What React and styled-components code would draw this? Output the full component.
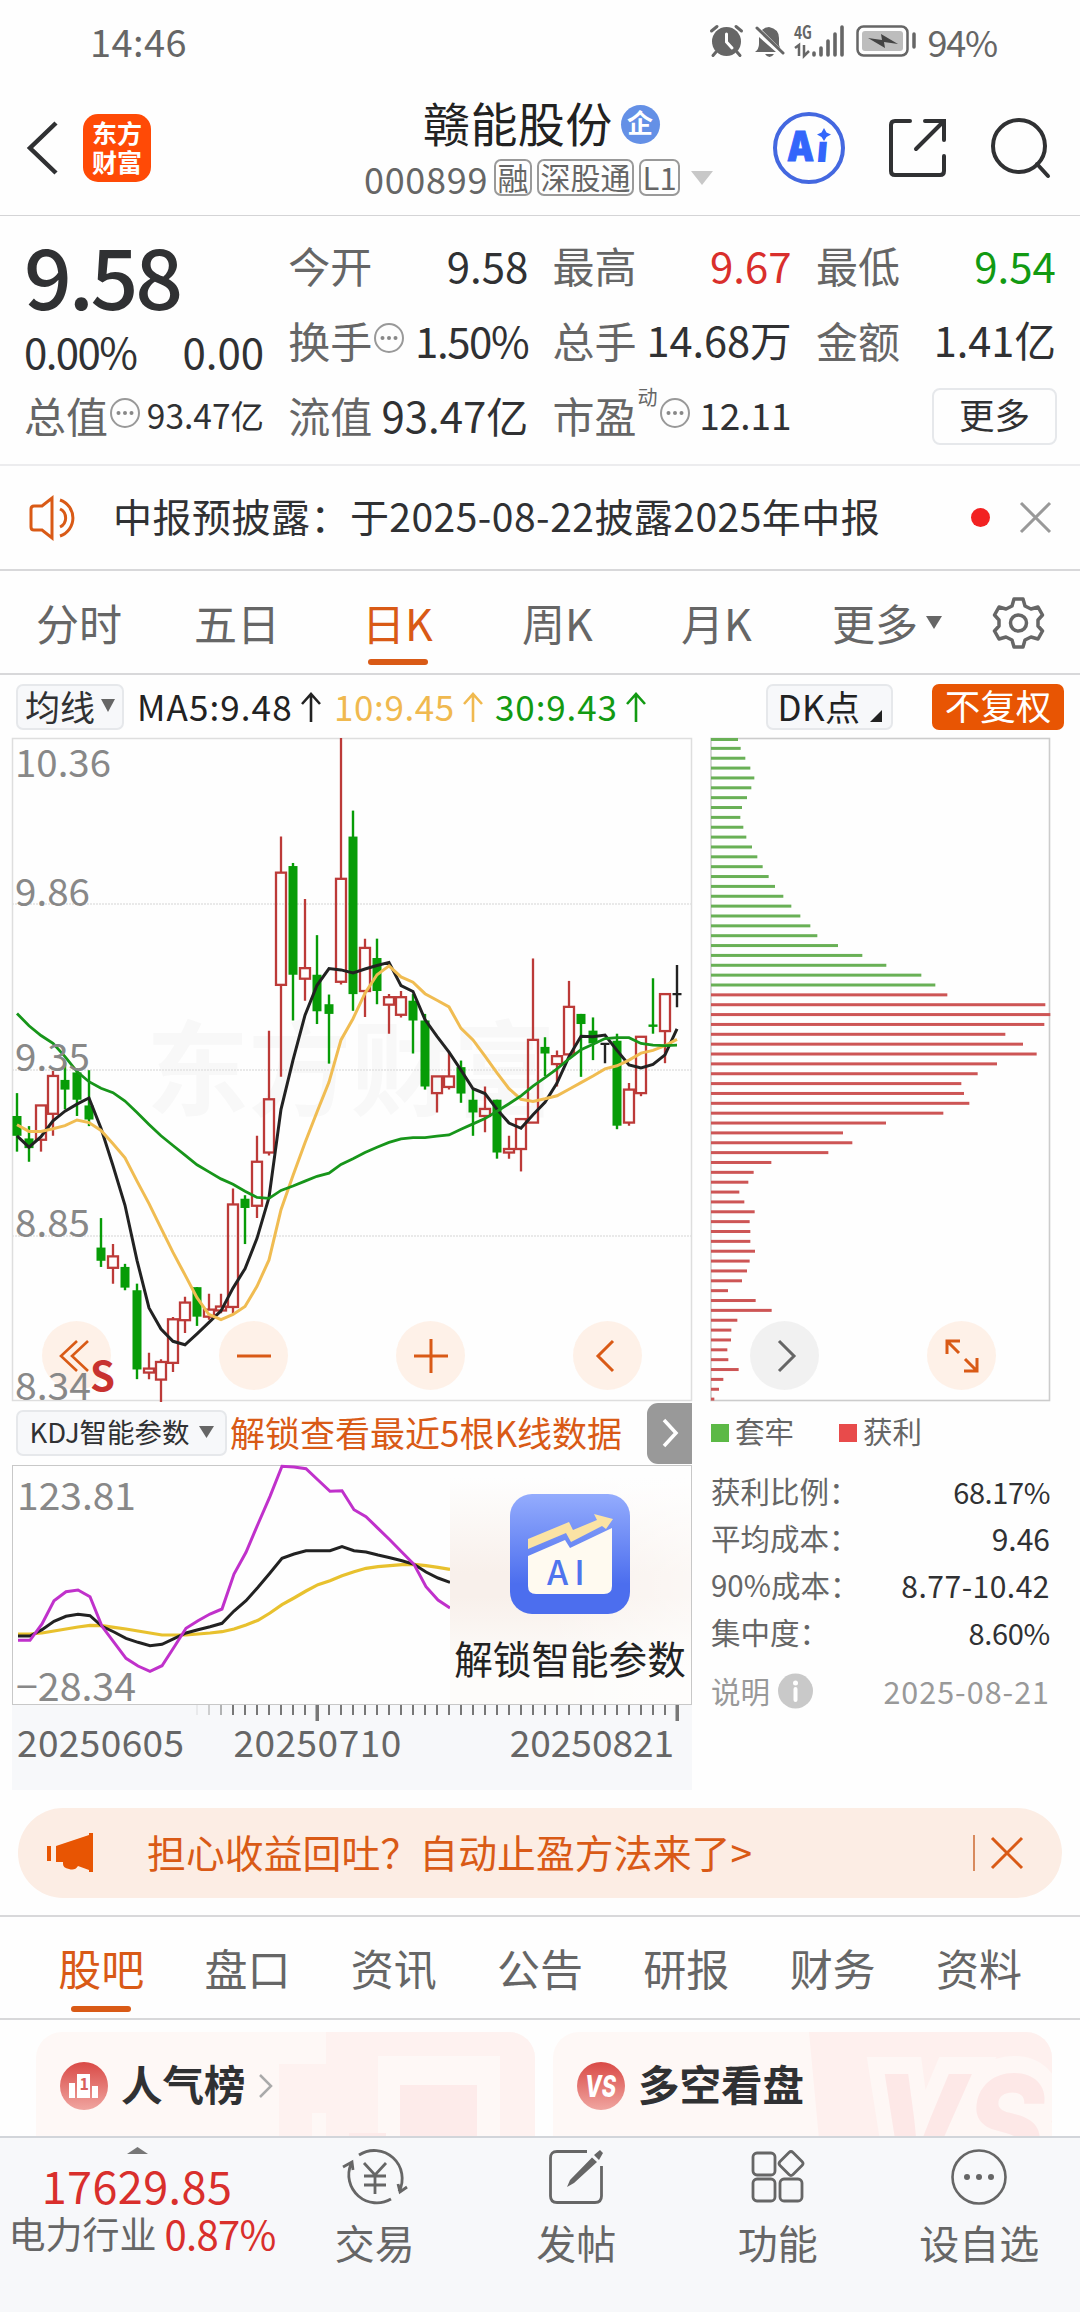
import React from "react";
import styled, { createGlobalStyle } from "styled-components";

const ORANGE = "#e85503";
const ORANGE_TEXT = "#d95a16";
const RED = "#d92f2c";
const GREEN = "#129a12";
const GREY = "#666";
const INK = "#303133";

const Global = createGlobalStyle`
  * { box-sizing: border-box; }
  body {
    margin: 0;
    background: #fff;
    font-family: "Noto Sans CJK SC", "Noto Sans", sans-serif;
    color: ${INK};
    -webkit-font-smoothing: antialiased;
  }
`;

const Page = styled.div`
  width: 1080px;
  height: 2312px;
  display: flex;
  flex-direction: column;
  overflow: hidden;
  background: #fefefe;
`;

const Text = styled.span`
  display: block;
  white-space: nowrap;
  line-height: 1;
  font-size: ${(p) => p.$size || 42}px;
  color: ${(p) => p.$color || INK};
  font-weight: ${(p) => p.$weight || 400};
  letter-spacing: ${(p) => p.$track || 0}px;
`;

const Icon = styled.svg`
  display: block;
  flex: none;
  overflow: visible;
`;

/* ---------- status bar ---------- */
const StatusBar = styled.div`
  height: 81px;
  flex: none;
  display: flex;
  align-items: center;
  justify-content: space-between;
  padding: 0 83px 0 90px;
`;
const StatusIcons = styled.div`
  display: flex;
  align-items: center;
  gap: 9px;
`;

/* ---------- header ---------- */
const Header = styled.header`
  height: 135px;
  flex: none;
  display: flex;
  align-items: center;
  border-bottom: 1px solid #d4d4d6;
`;
const HeaderLeft = styled.div`
  width: 364px;
  display: flex;
  align-items: center;
  gap: 24px;
  padding-left: 27px;
`;
const Logo = styled.div`
  width: 68px;
  height: 68px;
  border-radius: 15px;
  background: #ff4a06;
  display: flex;
  flex-direction: column;
  align-items: center;
  justify-content: center;
  gap: 4px;
  padding-bottom: 3px;
`;
const HeaderMid = styled.div`
  width: 409px;
  padding-top: 1px;
`;
const TitleRow = styled.div`
  height: 58px;
  display: flex;
  align-items: center;
  gap: 8px;
  padding-left: 59px;
`;
const Badge = styled.div`
  width: 39px;
  height: 39px;
  border-radius: 50%;
  margin-top: 5px;
  background: #6490e6;
  display: flex;
  justify-content: center;
  padding-top: 4px;
`;
const CodeRow = styled.div`
  height: 54px;
  display: flex;
  align-items: center;
`;
const Tag = styled.div`
  height: 37px;
  width: ${(p) => p.$w}px;
  margin-left: ${(p) => p.$ml || 5}px;
  border: 2px solid #999;
  border-radius: 7px;
  display: flex;
  align-items: center;
  justify-content: center;
  padding-bottom: 3px;
`;
const HeaderRight = styled.div`
  flex: 1;
  display: flex;
  align-items: center;
  justify-content: space-between;
  padding-right: 29px;
`;

/* ---------- quote ---------- */
const Quote = styled.section`
  height: 250px;
  flex: none;
  padding: 11px 24px 0 24px;
  display: grid;
  grid-template-columns: 240px 240px 239px 240px;
  column-gap: 24.3px;
  border-bottom: 2px solid #ececee;
`;
const Col = styled.div`
  display: flex;
  flex-direction: column;
`;
const Cell = styled.div`
  height: ${(p) => p.$h || 75}px;
  display: flex;
  align-items: center;
  justify-content: ${(p) => (p.$end ? "flex-end" : "space-between")};
`;
const Label = styled.div`
  display: flex;
  align-items: center;
  gap: ${(p) => p.$gap || 1}px;
`;
const Sup = styled(Text)`
  align-self: flex-start;
  margin-top: -7px;
`;
const MoreButton = styled.button`
  width: 125px;
  height: 57px;
  margin: 3px -1px 0 0;
  border: 2px solid #e6e8eb;
  border-radius: 8px;
  background: #fefefe;
  padding: 0 0 5px;
  font-family: inherit;
  display: flex;
  align-items: center;
  justify-content: center;
`;

/* ---------- news ---------- */
const News = styled.section`
  height: 105px;
  flex: none;
  display: flex;
  align-items: center;
  padding: 0 29px;
  border-bottom: 2px solid #d8d8da;
`;
const NewsText = styled.div`
  margin-left: 33px;
  padding-bottom: 4px;
  flex: 1;
`;
const Dot = styled.div`
  width: 19px;
  height: 19px;
  border-radius: 50%;
  background: #f22222;
  margin-right: 30px;
`;

/* ---------- tabs ---------- */
const PeriodTabs = styled.nav`
  height: 104px;
  flex: none;
  display: grid;
  grid-template-columns: 158px 158px 163px 157px 161px 176px 107px;
  border-bottom: 2px solid #d8d8da;
`;
const Tab = styled.div`
  display: flex;
  flex-direction: column;
  align-items: center;
  padding-top: ${(p) => p.$pt || 30}px;
  color: ${(p) => (p.$on ? ORANGE_TEXT : GREY)};
  font-size: ${(p) => p.$size || 43}px;
  line-height: 1;
  white-space: nowrap;
`;
const TabLine = styled.i`
  width: 60px;
  height: 6px;
  border-radius: 3px;
  background: ${ORANGE_TEXT};
  margin-top: ${(p) => p.$mt || 17}px;
`;
const MoreTab = styled.div`
  display: flex;
  padding: 30px 0 0 35px;
  gap: 8px;
`;
const GearCell = styled.div`
  padding: 26px 0 0 20px;
`;

/* ---------- MA toolbar ---------- */
const MaBar = styled.div`
  height: 63px;
  flex: none;
  display: flex;
  align-items: center;
  padding: 0 16px 0 16px;
`;
const Chip = styled.div`
  height: 46px;
  width: ${(p) => p.$w}px;
  background: ${(p) => (p.$solid ? ORANGE : "#f7f8fa")};
  border: ${(p) => (p.$solid ? "none" : "2px solid #e6e8eb")};
  border-radius: 7px;
  display: flex;
  align-items: center;
  justify-content: center;
  gap: ${(p) => p.$gap || 6}px;
  padding-bottom: 3px;
`;
const MaItem = styled.div`
  display: flex;
  align-items: center;
  gap: 8px;
  width: ${(p) => p.$w}px;
  margin-left: ${(p) => p.$ml}px;
  padding-bottom: 3px;
`;
const Spacer = styled.div`
  flex: 1;
`;

/* ---------- chart area ---------- */
const ChartArea = styled.section`
  position: relative;
  height: 1052px;
  flex: none;
  display: flex;
  padding: 0 0 0 12px;
`;
const LeftColumn = styled.div`
  width: 680px;
`;
const RightColumn = styled.div`
  width: 340px;
  margin-left: 18px;
`;
const FloatBar = styled.div`
  position: absolute;
  left: 42px;
  top: 583px;
  width: 954px;
  display: flex;
  justify-content: space-between;
`;
const FloatButton = styled.div`
  width: 69px;
  height: 69px;
  border-radius: 50%;
  background: ${(p) => (p.$grey ? "rgba(238,238,238,.8)" : "rgba(254,237,226,.8)")};
  display: flex;
  align-items: center;
  justify-content: center;
`;
const ParamRow = styled.div`
  height: 64px;
  display: flex;
  align-items: center;
  padding-left: 4px;
`;
const UnlockText = styled.div`
  margin-left: 3px;
  padding-bottom: 3px;
  flex: 1;
`;
const NextButton = styled.div`
  width: 45px;
  height: 61px;
  background: #999;
  border-radius: 11px 0 0 11px;
  display: flex;
  align-items: center;
  justify-content: center;
`;
const KdjBox = styled.div`
  height: 240px;
  border: 1px solid #c8c8c8;
  display: flex;
`;
const Promo = styled.div`
  flex: 1;
  display: flex;
  flex-direction: column;
  align-items: center;
  padding: 28px 1px 0 0;
  gap: 24px;
  background: linear-gradient(90deg, rgba(255,255,255,0) 40%, rgba(255,255,255,.5)),
    linear-gradient(180deg, #fefefe 5%, #f8f0eb 45%, #f8f0eb 55%, #fdfcfa 85%);
`;
const PromoIcon = styled.div`
  width: 120px;
  height: 120px;
  border-radius: 22px;
  background: linear-gradient(180deg, #94acfd, #4c6eee 75%);
`;
const Axis = styled.div`
  height: 85px;
  background: #f7f8fa;
`;
const Dates = styled.div`
  display: flex;
  padding: 1px 10px 0 5px;
`;
const DateText = styled(Text)`
  margin-left: ${(p) => p.$ml || 0}px;
`;

/* ---------- chip info ---------- */
const Legend = styled.div`
  display: flex;
  align-items: center;
  height: 62px;
  padding-bottom: 2px;
`;
const Square = styled.i`
  width: 18px;
  height: 18px;
  margin: 3px 6px 0 ${(p) => p.$ml || 1}px;
  background: ${(p) => p.$color};
`;
const InfoRow = styled.div`
  height: ${(p) => p.$h || 47}px;
  display: flex;
  align-items: center;
  justify-content: space-between;
  padding-left: 1px;
`;

/* ---------- banner ---------- */
const Banner = styled.div`
  height: 90px;
  flex: none;
  margin: 18px 18px 17px;
  border-radius: 45px;
  background: #fcede4;
  display: flex;
  align-items: center;
  padding: 0 39px 0 29px;
`;
const BannerText = styled.div`
  margin-left: 54px;
  padding-bottom: 4px;
  flex: 1;
`;
const Divider = styled.i`
  width: 2px;
  height: 36px;
  background: #d88a5e;
  margin-right: 16px;
`;

/* ---------- content tabs ---------- */
const ContentTabs = styled.nav`
  height: 105px;
  flex: none;
  display: grid;
  grid-template-columns: repeat(7, 146.3px);
  padding-left: 28px;
  border-top: 2px solid #d8d8da;
  border-bottom: 2px solid #d8d8da;
`;
const Cards = styled.div`
  height: 116px;
  flex: none;
  overflow: hidden;
  display: flex;
  gap: 18px;
  padding: 12px 28px 0 36px;
`;
const Card = styled.div`
  position: relative;
  width: 499px;
  height: 150px;
  overflow: hidden;
  border-radius: 26px;
  background: #fef8f6;
`;
const CardArt = styled.svg`
  position: absolute;
  inset: 0;
`;
const CardHead = styled.div`
  position: relative;
  display: flex;
  align-items: center;
  padding: 30px 0 0 24px;
`;
const CardTitle = styled(Text)`
  margin: -5px 13px 0;
`;

/* ---------- bottom nav ---------- */
const BottomNav = styled.footer`
  flex: 1;
  border-top: 2px solid #d2d5da;
  background: #f7f8fa;
  display: grid;
  grid-template-columns: 274px repeat(4, 201.5px);
`;
const IndexBox = styled.div`
  display: flex;
  flex-direction: column;
  align-items: center;
  padding-top: 9px;
`;
const IndexRow = styled.div`
  display: flex;
  align-items: center;
  gap: 8px;
  margin: 6px 0 0 10px;
`;
const NavItem = styled.div`
  display: flex;
  flex-direction: column;
  align-items: center;
  gap: 14px;
  padding-top: 8px;
`;

/* ---------- small drawings ---------- */
const Triangle = ({ w, h, color = GREY, up }) => (
  <Icon width={w} height={h} viewBox="0 0 10 10" preserveAspectRatio="none">
    <path d={up ? "M0 10H10L5 0Z" : "M0 0H10L5 10Z"} fill={color} />
  </Icon>
);
const MoreDots = () => (
  <Icon width="32" height="32" viewBox="0 0 32 32" style={{ marginTop: -4 }}>
    <circle cx="16" cy="16" r="14" fill="none" stroke="#999" strokeWidth="2" />
    <circle cx="9.5" cy="16" r="2" fill="#888" />
    <circle cx="16" cy="16" r="2" fill="#888" />
    <circle cx="22.5" cy="16" r="2" fill="#888" />
  </Icon>
);
const UpArrow = ({ color }) => (
  <Icon width="20" height="30" viewBox="0 0 20 30" style={{ marginTop: 4 }}>
    <path d="M10 30V2M1 12L10 2L19 12" fill="none" stroke={color} strokeWidth="2.6" />
  </Icon>
);
const Cross = ({ s, color, sw = 3 }) => (
  <Icon width={s} height={s} viewBox={`0 0 ${s} ${s}`}>
    <path d={`M1 1L${s - 1} ${s - 1}M${s - 1} 1L1 ${s - 1}`} stroke={color} strokeWidth={sw} />
  </Icon>
);

/* ---------- chart data ---------- */
const X = (i) => 5 + i * 12;
const Y = (v) => (v - 18) / 2.2725;

// [kind, high, bodyTop, bodyBottom, low]
const candles = [
  ["g",825,877,922,958],["g",900,928,950,981],["r",853,853,931,958],["r",775,786,872,922],
  ["g",755,795,817,862],["g",772,778,840,877],["g",773,853,885,900],["g",1109,1176,1206,1220],
  ["r",1168,1196,1222,1258],["g",1213,1220,1267,1273],["g",1258,1273,1453,1475],["r",1415,1451,1460,1475],
  ["r",1430,1436,1476,1527],["r",1334,1339,1438,1459],["r",1288,1301,1341,1370],["g",1266,1266,1333,1354],
  ["r",1281,1317,1333,1340],["r",1281,1310,1319,1325],["r",1042,1078,1311,1325],["g",1057,1065,1086,1168],
  ["r",922,981,1081,1109],["r",683,839,960,967],["r",242,324,579,788],["g",302,309,556,660],
  ["r",384,541,565,615],["g",466,556,639,668],["g",601,623,645,758],["r",18,338,572,578],
  ["g",183,242,600,638],["r",474,495,593,652],["g",474,518,593,623],["r",600,607,624,690],
  ["r",593,607,647,653],["g",600,615,660,735],["g",645,660,810,817],["r",786,787,825,869],
  ["r",730,787,811,817],["g",751,766,826,847],["g",817,840,869,922],["r",810,861,877,914],
  ["g",840,840,960,974],["r",922,952,960,974],["r",884,884,952,1003],["r",519,704,892,892],
  ["g",698,720,735,786],["r",728,741,759,810],["r",570,629,737,737],["g",645,645,668,788],
  ["g",653,683,712,750],["k",712,713,713,757],["g",690,706,899,907],["r",802,817,892,899],
  ["r",697,697,825,832],["g",564,669,674,690],["r",600,600,684,757],["k",534,600,600,630],
];
const ma5 = [922,948,924,888,866,850,836,905,990,1080,1205,1313,1361,1389,1397,1372,1346,1320,1268,1224,1155,1062,862,750,648,580,542,545,552,543,535,528,581,594,658,696,732,773,815,826,862,893,905,874,846,802,742,696,697,693,728,761,768,760,738,679];
const ma10 = [897,912,912,906,899,886,892,910,940,972,1025,1076,1132,1187,1238,1290,1328,1340,1328,1310,1264,1204,1090,1012,938,868,800,704,656,598,556,536,561,573,599,614,629,678,704,741,779,815,839,844,838,831,816,801,786,770,763,750,734,728,717,703];
const ma30 = [644,672,694,712,742,776,799,814,824,843,869,896,922,944,966,988,1004,1020,1032,1048,1062,1064,1046,1036,1025,1014,1007,987,974,960,948,937,929,926,926,923,920,907,895,883,866,849,831,809,790,770,747,726,714,701,699,699,712,716,717,716];

const kdjK = [706,706,687,662,647,641,645,677,694,713,725,735,731,714,697,687,678,668,631,600,560,517,473,460,450,450,450,438,450,454,463,471,480,491,514,532,545];
const kdjD = [700,700,697,691,685,679,674,675,680,685,691,697,703,703,703,700,697,693,685,673,659,637,612,592,571,552,540,525,513,503,498,495,492,491,495,500,506];
const kdjJ = [719,719,670,600,573,568,588,677,725,773,796,812,795,740,683,660,640,625,520,455,370,287,197,199,204,238,272,270,327,348,383,418,455,491,558,598,622];

const trapped = [143,151,165,180,192,183,170,155,150,159,168,185,201,217,235,254,279,303,330,360,381,443,516,588,693,735];
const profit = [771,1065,1080,1062,945,998,1039,920,862,813,821,837,759,587,458,486,414,243,190,174,147,162,193,178,180,180,194,178,170,155,113,196,244,141,123,122,111,114,145,99,86,72];

const polyline = (arr, fy) => arr.map((v, i) => `${X(i)},${fy(v).toFixed(1)}`).join(" ");

const Candle = ({ i, d }) => {
  const [kind, hi, top, bot, lo] = d;
  const x = X(i);
  if (kind === "k")
    return (
      <g stroke="#222" strokeWidth="2.4">
        <path d={`M${x} ${Y(hi)}V${Y(lo)}M${x - 4.5} ${Y(top)}H${x + 4.5}`} />
      </g>
    );
  if (kind === "g")
    return (
      <g fill="#079c07">
        <rect x={x - 1.2} y={Y(hi)} width="2.4" height={Y(lo) - Y(hi)} />
        <rect x={x - 4.5} y={Y(top)} width="9" height={Math.max(2.4, Y(bot) - Y(top))} />
      </g>
    );
  return (
    <g stroke="#bc3a38" strokeWidth="2.3" fill="none">
      <path d={`M${x} ${Y(hi)}V${Y(top)}M${x} ${Y(bot)}V${Y(lo)}`} />
      <rect x={x - 5} y={Y(top)} width="10" height={Math.max(2, Y(bot) - Y(top))} />
    </g>
  );
};

const AxisLabel = ({ x, y, w, children }) => (
  <text x={x} y={y} textLength={w} lengthAdjust="spacingAndGlyphs" fontSize="38" fill="#888">
    {children}
  </text>
);

const PriceChart = () => (
  <Icon width="680" height="663" viewBox="0 0 680 663">
    <text x="134" y="370" fontSize="103" fontWeight="700" fill="#f8f8f8" textLength="410">东方财富</text>
    {[166, 332, 498].map((y) => (
      <path key={y} d={`M0 ${y}H680`} stroke="#e2e2e2" strokeWidth="1.5" strokeDasharray="2 1" />
    ))}
    <rect x="0.5" y="0.5" width="679" height="662" fill="none" stroke="#dedede" strokeWidth="1.5" />
    {candles.map((d, i) => <Candle key={i} i={i} d={d} />)}
    <polyline points={polyline(ma5, Y)} fill="none" stroke="#222" strokeWidth="3" />
    <polyline points={polyline(ma10, Y)} fill="none" stroke="#f0bc52" strokeWidth="3" />
    <polyline points={polyline(ma30, Y)} fill="none" stroke="#17951a" strokeWidth="2.8" />
  </Icon>
);

const PriceLabels = styled.svg`
  position: absolute;
  left: 12px;
  top: 0;
`;

const ChipChart = () => (
  <Icon width="340" height="663" viewBox="0 0 340 663">
    <rect x="1" y="0.5" width="338.5" height="662" fill="none" stroke="#ccc" strokeWidth="1.6" />
    {[...trapped, ...profit].map((v, i) => (
      <rect key={i} x="1" y={Math.max(0, i * 9.86 - 1)} width={(v - 62) / 3} height="3"
        fill={i < trapped.length ? "#69b056" : "#cd5555"} />
    ))}
  </Icon>
);

const KdjChart = () => {
  const fy = (v) => (v - 196) / 3;
  return (
    <Icon width="437" height="238" viewBox="0 0 437 238">
      <AxisLabel x="4" y="44" w="119">123.81</AxisLabel>
      <polyline points={polyline(kdjD, fy)} fill="none" stroke="#e8c12e" strokeWidth="3.2" />
      <polyline points={polyline(kdjK, fy)} fill="none" stroke="#222" strokeWidth="3" />
      <polyline points={polyline(kdjJ, fy)} fill="none" stroke="#c031cb" strokeWidth="3" />
      <AxisLabel x="3" y="235" w="120">−28.34</AxisLabel>
    </Icon>
  );
};

const Ticks = () => (
  <Icon width="680" height="17" viewBox="0 0 680 17">
    {Array.from({ length: 41 }, (_, k) => k + 15).map((i) => {
      const major = i === 25 || i === 55;
      return (
        <rect key={i} x={X(i) - (major ? 1.5 : 1)} y="0" width={major ? 3.5 : 2} height={major ? 16 : 10}
          fill="#777" opacity={i < 18 ? 0.1 + (i - 15) * 0.22 : 1} />
      );
    })}
  </Icon>
);

const NAV = [
  ["交易", (
    <Icon key="a" width="66" height="62" viewBox="0 0 66 62" fill="none" stroke={GREY} strokeWidth="2.8">
      <path d="M17 9A28 28 0 0 1 57 45.500M49 53A28 28 0 0 1 9 18M1 21L10 16L11 24M65 41L58 46L56 38" />
      <path d="M22 17L33 29L44 17M22 30H44M22 39H44M33 29V48" />
    </Icon>
  )],
  ["发帖", (
    <Icon key="b" width="54" height="62" viewBox="0 0 54 62" fill="none" stroke={GREY} strokeWidth="2.8">
      <path d="M38 5.500H8Q1.500 5.500 1.500 12V50Q1.500 56.500 8 56.500H46Q52.500 56.500 52.500 50V20" />
      <path d="M43 11.500L48 16L25 37L18 41L21 34ZM45 9L51 4L54 7L50 14Z" fill={GREY} stroke="none" />
    </Icon>
  )],
  ["功能", (
    <Icon key="c" width="54" height="62" viewBox="0 0 54 62" fill="none" stroke={GREY} strokeWidth="2.8">
      <rect x="2" y="7" width="22" height="22" rx="4" />
      <rect x="2" y="33" width="22" height="22" rx="4" />
      <rect x="29" y="33" width="22" height="22" rx="4" />
      <path d="M38 6.500Q40 4.500 42 6.500L51 15.500Q53 17.500 51 19.500L42 28.500Q40 30.500 38 28.500L29 19.500Q27 17.500 29 15.500Z" />
    </Icon>
  )],
  ["设自选", (
    <Icon key="d" width="56" height="62" viewBox="0 0 56 62" fill="none" stroke={GREY} strokeWidth="2.6">
      <circle cx="28" cy="31" r="26.500" />
      <g fill={GREY} stroke="none">
        <circle cx="16" cy="31" r="3" /><circle cx="28" cy="31" r="3" /><circle cx="40" cy="31" r="3" />
      </g>
    </Icon>
  )],
];

const Pair = ({ label, value, color, size }) => (
  <Cell>
    <Text $color={GREY}>{label}</Text>
    <Text $color={color} $size={size}>{value}</Text>
  </Cell>
);

export default function App() {
  return (
    <Page>
      <Global />
      <StatusBar>
        <Text $size={38} $color={GREY} $track={0.4}>14:46</Text>
        <StatusIcons>
          <Icon width="33" height="32" viewBox="0 0 33 32">
            <circle cx="16.500" cy="16.500" r="14.500" fill={GREY} />
            <path d="M16.500 9V17L22 23" stroke="#fff" strokeWidth="3" fill="none" strokeLinecap="round" />
            <path d="M1.500 6L7 1.500M26 1.500L31.500 6M6 27L3 30.500M27 27L30 30.500" stroke={GREY} strokeWidth="3" strokeLinecap="round" />
          </Icon>
          <Icon width="31" height="32" viewBox="0 0 31 32" style={{ marginLeft: 2 }}>
            <path d="M1 27Q5 24 5 19V12L22 27ZM8 5Q11 2 15 2Q25 4 25 13V20Q26 23 27 24ZM11 29H20Q18 32 15.500 32Q13 32 11 29Z" fill={GREY} />
            <path d="M3 3L29 28" stroke={GREY} strokeWidth="3" strokeLinecap="round" />
          </Icon>
          <Icon width="50" height="32" viewBox="0 0 50 32">
            <text x="0" y="14" fontSize="18" fontWeight="700" fill={GREY} textLength="18" lengthAdjust="spacingAndGlyphs">4G</text>
            <path d="M1 23L5 20V31M10 20V31L15 26" stroke={GREY} strokeWidth="2.500" fill="none" />
            <path d="M20 30V28M27 30V23M34 30V16M41 30V9M48 30V2" stroke={GREY} strokeWidth="3.600" strokeLinecap="round" />
          </Icon>
          <Icon width="62" height="32" viewBox="0 0 62 32" style={{ marginLeft: 3 }}>
            <rect x="1.500" y="1.500" width="50" height="29" rx="6" fill="none" stroke={GREY} strokeWidth="2.500" />
            <rect x="6" y="6" width="41" height="20" rx="3" fill="#bdbdbd" />
            <path d="M12 13L26 15L25 9L42 19L28 17L29 23Z" fill="#444" />
            <path d="M58 9V22" stroke={GREY} strokeWidth="3.500" strokeLinecap="round" />
          </Icon>
          <Text $size={36} $color={GREY} $track={-1.2}>94%</Text>
        </StatusIcons>
      </StatusBar>

      <Header>
        <HeaderLeft>
          <Icon width="32" height="54" viewBox="0 0 32 54">
            <path d="M29 2L3 27L29 52" fill="none" stroke="#303133" strokeWidth="4.500" />
          </Icon>
          <Logo>
            <Text $size={25} $weight={700} $color="#fff">东方</Text>
            <Text $size={25} $weight={700} $color="#fff">财富</Text>
          </Logo>
        </HeaderLeft>
        <HeaderMid>
          <TitleRow>
            <Text $size={47} $color="#222" $track={0.4}>赣能股份</Text>
            <Badge><Text $size={26} $weight={700} $color="#fff">企</Text></Badge>
          </TitleRow>
          <CodeRow>
            <Text $size={36} $color={GREY} $track={0.7}>000899</Text>
            <Tag $w={38} $ml={6}><Text $size={31} $color={GREY}>融</Text></Tag>
            <Tag $w={97}><Text $size={30} $color={GREY}>深股通</Text></Tag>
            <Tag $w={41}><Text $size={31} $color={GREY}>L1</Text></Tag>
            <Icon width="22" height="14" viewBox="0 0 22 14" style={{ marginLeft: 11 }}>
              <path d="M0 0H22L11 14Z" fill="#c8c8c8" />
            </Icon>
          </CodeRow>
        </HeaderMid>
        <HeaderRight>
          <Icon width="72" height="72" viewBox="0 0 72 72">
            <circle cx="36" cy="36" r="34" fill="none" stroke="#4468e0" strokeWidth="4" />
            <g fill="#3366fb" fontFamily="Inter" fontWeight="900">
              <text x="14" y="49" fontSize="41" textLength="27" lengthAdjust="spacingAndGlyphs" stroke="#3366fb">A</text>
              <text x="43" y="50" fontSize="37" transform="skewX(-5)" style={{ transformOrigin: "50px 50px" }}>ı</text>
            </g>
            <path d="M51 16L53.500 20.500L58 22.500L53.500 25L51 29L48.500 25L44 22.500L48.500 20.500Z" fill="#3366fb" />
          </Icon>
          <Icon width="58" height="58" viewBox="0 0 58 58" fill="none" stroke="#303133" strokeWidth="4" strokeLinecap="round">
            <path d="M21 2H6Q2 2 2 6V52Q2 56 6 56H51Q55 56 55 52V37M36 2H55V21M54 3L27 30" />
          </Icon>
          <Icon width="60" height="60" viewBox="0 0 60 60" fill="none" stroke="#303133" strokeWidth="4" strokeLinecap="round">
            <circle cx="28" cy="28" r="26" />
            <path d="M46 46L57 58" />
          </Icon>
        </HeaderRight>
      </Header>

      <Quote>
        <Col>
          <Cell $h={93}><Text $size={84} $weight={500} $track={-3.2}>9.58</Text></Cell>
          <Cell $h={62}><Text $size={42} $track={-1.6}>0.00%</Text><Text>0.00</Text></Cell>
          <Cell $h={65}>
            <Label><Text $color={GREY}>总值</Text><MoreDots /></Label>
            <Text $size={33.5}>93.47亿</Text>
          </Cell>
        </Col>
        <Col>
          <Pair label="今开" value="9.58" />
          <Cell>
            <Label><Text $color={GREY}>换手</Text><MoreDots /></Label>
            <Text $track={-1.4}>1.50%</Text>
          </Cell>
          <Pair label="流值" value="93.47亿" />
        </Col>
        <Col>
          <Pair label="最高" value="9.67" color={RED} />
          <Pair label="总手" value="14.68万" size={41.5} />
          <Cell>
            <Label>
              <Text $color={GREY}>市盈</Text>
              <Sup $size={20} $color={GREY}>动</Sup>
              <MoreDots />
            </Label>
            <Text $size={37}>12.11</Text>
          </Cell>
        </Col>
        <Col>
          <Pair label="最低" value="9.54" color={GREEN} />
          <Pair label="金额" value="1.41亿" size={41.5} />
          <Cell $end><MoreButton><Text $size={35.5}>更多</Text></MoreButton></Cell>
        </Col>
      </Quote>

      <News>
        <Icon width="51" height="44" viewBox="0 0 51 44" fill="none" stroke={ORANGE_TEXT} strokeWidth="3">
          <path d="M23 2V42L13 34H5Q2 34 2 31V13Q2 10 5 10H13ZM31 13A10 10 0 0 1 31 31M31 4A19 19 0 0 1 31 40" />
        </Icon>
        <NewsText><Text $size={39} $track={0.48}>中报预披露：于2025-08-22披露2025年中报</Text></NewsText>
        <Dot />
        <Cross s={31} color="#999" />
      </News>

      <PeriodTabs>
        <Tab>分时</Tab>
        <Tab>五日</Tab>
        <Tab $on>日K<TabLine $mt={15} /></Tab>
        <Tab>周K</Tab>
        <Tab>月K</Tab>
        <MoreTab>
          <Text $size={43} $color={GREY}>更多</Text>
          <Icon width="16" height="13" viewBox="0 0 16 13" style={{ marginTop: 15 }}>
            <path d="M0 0H16L8 13Z" fill={GREY} />
          </Icon>
        </MoreTab>
        <GearCell>
          <Icon width="51" height="52" viewBox="0 0 51 52" fill="none" stroke={GREY} strokeWidth="3.500" strokeLinejoin="round">
            <path d="M21 2H30L32 9L38 12L45 10L49.500 18L45 23V29L49.500 34L45 42L38 40L32 43L30 50H21L19 43L13 40L6 42L1.500 34L6 29V23L1.500 18L6 10L13 12L19 9Z" />
            <circle cx="25.500" cy="26" r="8" />
          </Icon>
        </GearCell>
      </PeriodTabs>

      <MaBar>
        <Chip $w={108}><Text $size={35}>均线</Text><Triangle w={14} h={13} /></Chip>
        <MaItem $w={189} $ml={13}><Text $size={35} $color="#222" $track={1.1}>MA5:9.48</Text><UpArrow color="#222" /></MaItem>
        <MaItem $w={152} $ml={8}><Text $size={35} $color="#f0b94f" $track={0.6}>10:9.45</Text><UpArrow color="#f0b94f" /></MaItem>
        <MaItem $w={152} $ml={9}><Text $size={35} $color={GREEN} $track={0.9}>30:9.43</Text><UpArrow color={GREEN} /></MaItem>
        <Spacer />
        <Chip $w={127} $gap={9}>
          <Text $size={35} $color="#222" $track={0.5}>DK点</Text>
          <Icon width="12" height="12" viewBox="0 0 12 12" style={{ marginTop: 22 }}>
            <path d="M12 0V12H0Z" fill="#222" />
          </Icon>
        </Chip>
        <Chip $w={132} $solid style={{ marginLeft: 39 }}><Text $size={35.5} $color="#fff">不复权</Text></Chip>
      </MaBar>

      <ChartArea>
        <LeftColumn>
          <PriceChart />
          <ParamRow>
            <Chip $w={211} $gap={9}><Text $size={27.5}>KDJ智能参数</Text><Triangle w={15} h={12} /></Chip>
            <UnlockText><Text $size={35} $color={ORANGE_TEXT}>解锁查看最近5根K线数据</Text></UnlockText>
            <NextButton>
              <Icon width="16" height="28" viewBox="0 0 16 28">
                <path d="M2 1L14 14L2 27" fill="none" stroke="#fff" strokeWidth="3.500" />
              </Icon>
            </NextButton>
          </ParamRow>
          <KdjBox>
            <KdjChart />
            <Promo>
              <PromoIcon>
                <Icon width="120" height="120" viewBox="0 0 120 120">
                  <path d="M18 62L55 46L60 54L102 34V92Q102 100 94 100H26Q18 100 18 92Z" fill="#fffaf0" />
                  <path d="M18 45L59 28L63 36L87 26L84 20L103 25L96 35L92 32L61 48L56 39L18 55Z" fill="#fbe3a4" />
                  <text x="37" y="91" fontSize="34" fontWeight="500" fill="#4f74ee" letterSpacing="6">AI</text>
                </Icon>
              </PromoIcon>
              <Text $size={38.6} $color="#222">解锁智能参数</Text>
            </Promo>
          </KdjBox>
          <Axis>
            <Ticks />
            <Dates>
              <Text $size={37} $color={GREY} $track={0.4}>20250605</Text>
              <DateText $size={37} $color={GREY} $ml={49} $track={0.5}>20250710</DateText>
              <DateText $size={37} $color={GREY} $ml={108} $track={0}>20250821</DateText>
            </Dates>
          </Axis>
        </LeftColumn>
        <RightColumn>
          <ChipChart />
          <Legend>
            <Square $color="#5cb946" /><Text $size={29.5} $color={GREY}>套牢</Text>
            <Square $color="#e84b4b" $ml={45} /><Text $size={29.5} $color={GREY}>获利</Text>
          </Legend>
          <InfoRow $h={56}><Text $size={29.5} $color={GREY}>获利比例：</Text><Text $size={29} $track={-0.4}>68.17%</Text></InfoRow>
          <InfoRow $h={38}><Text $size={29.5} $color={GREY}>平均成本：</Text><Text $size={30}>9.46</Text></InfoRow>
          <InfoRow $h={56}><Text $size={29.5} $color={GREY}>90%成本：</Text><Text $size={30} $track={0.5}>8.77-10.42</Text></InfoRow>
          <InfoRow $h={38}><Text $size={29.5} $color={GREY}>集中度：</Text><Text $size={29} $track={-0.3}>8.60%</Text></InfoRow>
          <InfoRow $h={80}>
            <Label $gap={8}>
              <Text $size={29.5} $color="#999">说明</Text>
              <Icon width="35" height="36" viewBox="0 0 35 36">
                <circle cx="17.500" cy="18" r="17.500" fill="#c9c9c9" />
                <circle cx="17.500" cy="10" r="2.500" fill="#fff" />
                <path d="M17.500 16V27" stroke="#fff" strokeWidth="4" strokeLinecap="round" />
              </Icon>
            </Label>
            <Text $size={30.5} $color="#999" $track={1}>2025-08-21</Text>
          </InfoRow>
        </RightColumn>
        <PriceLabels width="680" height="663" viewBox="0 0 680 663">
          <AxisLabel x="3" y="39" w="96">10.36</AxisLabel>
          <AxisLabel x="3" y="168" w="75">9.86</AxisLabel>
          <AxisLabel x="3" y="333" w="75">9.35</AxisLabel>
          <AxisLabel x="3" y="499" w="75">8.85</AxisLabel>
        </PriceLabels>
        <FloatBar>
          <FloatButton>
            <Icon width="30" height="32" viewBox="0 0 30 32" style={{ marginLeft: -5 }} fill="none" stroke={ORANGE_TEXT} strokeWidth="2.600">
              <path d="M18 1L2 16L18 31M29 1L13 16L29 31" />
            </Icon>
          </FloatButton>
          <FloatButton>
            <Icon width="34" height="34" viewBox="0 0 34 34" stroke={ORANGE_TEXT} strokeWidth="3"><path d="M0 17H34" /></Icon>
          </FloatButton>
          <FloatButton>
            <Icon width="34" height="34" viewBox="0 0 34 34" stroke={ORANGE_TEXT} strokeWidth="3"><path d="M0 17H34M17 0V34" /></Icon>
          </FloatButton>
          <FloatButton>
            <Icon width="18" height="32" viewBox="0 0 18 32" style={{ marginLeft: -5 }} fill="none" stroke={ORANGE_TEXT} strokeWidth="3"><path d="M17 1L2 16L17 31" /></Icon>
          </FloatButton>
          <FloatButton $grey>
            <Icon width="18" height="32" viewBox="0 0 18 32" style={{ marginLeft: 4 }} fill="none" stroke={GREY} strokeWidth="3"><path d="M1 1L16 16L1 31" /></Icon>
          </FloatButton>
          <FloatButton>
            <Icon width="34" height="34" viewBox="0 0 34 34" fill="none" stroke={ORANGE_TEXT} strokeWidth="3">
              <path d="M2 15V2H15M2 2L14 14M32 19V32H19M32 32L20 20" />
            </Icon>
          </FloatButton>
        </FloatBar>
        <PriceLabels width="680" height="663" viewBox="0 0 680 663">
          <AxisLabel x="3" y="662" w="76">8.34</AxisLabel>
          <text x="78" y="653" fontSize="40" fontWeight="700" fill="#c8322f">S</text>
        </PriceLabels>
      </ChartArea>

      <Banner>
        <Icon width="46" height="40" viewBox="0 0 46 40">
          <path d="M0 13H4V28H0ZM9 13L42 2V0H46V39H42V37L31 33Q28 38 22 36Q16 35 16 31V29H9Z" fill={ORANGE} />
        </Icon>
        <BannerText><Text $size={38.8} $color={ORANGE_TEXT} $track={0.1}>担心收益回吐？自动止盈方法来了&gt;</Text></BannerText>
        <Divider />
        <Cross s={32} color={ORANGE_TEXT} />
      </Banner>

      <ContentTabs>
        {["股吧", "盘口", "资讯", "公告", "研报", "财务", "资料"].map((t, i) => (
          <Tab key={t} $on={i === 0} $pt={29}>{t}{i === 0 && <TabLine />}</Tab>
        ))}
      </ContentTabs>

      <Cards>
        <Card>
          <CardArt width="499" height="150" viewBox="0 0 499 150">
            <path d="M243 32H290V0H499V150H243Z" fill="#fef2f0" />
            <path d="M276 81H290V150H276ZM342 24H464V150H342Z" fill="#fef8f6" />
            <path d="M364 53H441V150H364ZM313 101H350V150H313Z" fill="#fdebea" />
          </CardArt>
          <CardHead>
            <Icon width="48" height="48" viewBox="0 0 48 48">
              <defs>
                <linearGradient id="disc" x1="0" y1="0" x2="0" y2="1">
                  <stop offset="0" stopColor="#d94a46" /><stop offset="1" stopColor="#f0a5a0" />
                </linearGradient>
              </defs>
              <circle cx="24" cy="24" r="24" fill="url(#disc)" />
              <path d="M9 21H15V36H9ZM17 12H30V36H17ZM32 24H38V36H32Z" fill="#fff" />
              <text x="19.500" y="28" fontSize="16" fontWeight="700" fill="#d9605c">1</text>
            </Icon>
            <CardTitle $size={41.5} $weight={700}>人气榜</CardTitle>
            <Icon width="14" height="24" viewBox="0 0 14 24"><path d="M1 1L12 12L1 23" fill="none" stroke="#aaa" strokeWidth="2.500" /></Icon>
          </CardHead>
        </Card>
        <Card>
          <CardArt width="499" height="150" viewBox="0 0 499 150">
            <path d="M256 0H499V150H270Z" fill="#fef0ee" />
            <text x="320" y="141" fontFamily="Inter" fontSize="136" fontWeight="800" fontStyle="italic" fill="#fde8e7"
              stroke="#fef7f5" strokeWidth="34" paintOrder="stroke" textLength="172" lengthAdjust="spacingAndGlyphs">VS</text>
          </CardArt>
          <CardHead>
            <Icon width="48" height="48" viewBox="0 0 48 48">
              <circle cx="24" cy="24" r="24" fill="url(#disc)" />
              <text x="23.500" y="35" textAnchor="middle" fontFamily="Inter" fontSize="30" fontWeight="800" fontStyle="italic" fill="#fff"
                textLength="31" lengthAdjust="spacingAndGlyphs">VS</text>
            </Icon>
            <CardTitle $size={41.5} $weight={700}>多空看盘</CardTitle>
          </CardHead>
        </Card>
      </Cards>

      <BottomNav>
        <IndexBox>
          <Triangle w={21} h={7} up color="#777" />
          <Text $size={45} $color={RED} $track={0.4} style={{ marginTop: 8 }}>17629.85</Text>
          <IndexRow>
            <Text $size={37} $color={GREY}>电力行业</Text>
            <Text $size={40} $color={RED} $track={-0.7}>0.87%</Text>
          </IndexRow>
        </IndexBox>
        {NAV.map(([label, icon]) => (
          <NavItem key={label}>{icon}<Text $size={40} $color={GREY}>{label}</Text></NavItem>
        ))}
      </BottomNav>
    </Page>
  );
}
